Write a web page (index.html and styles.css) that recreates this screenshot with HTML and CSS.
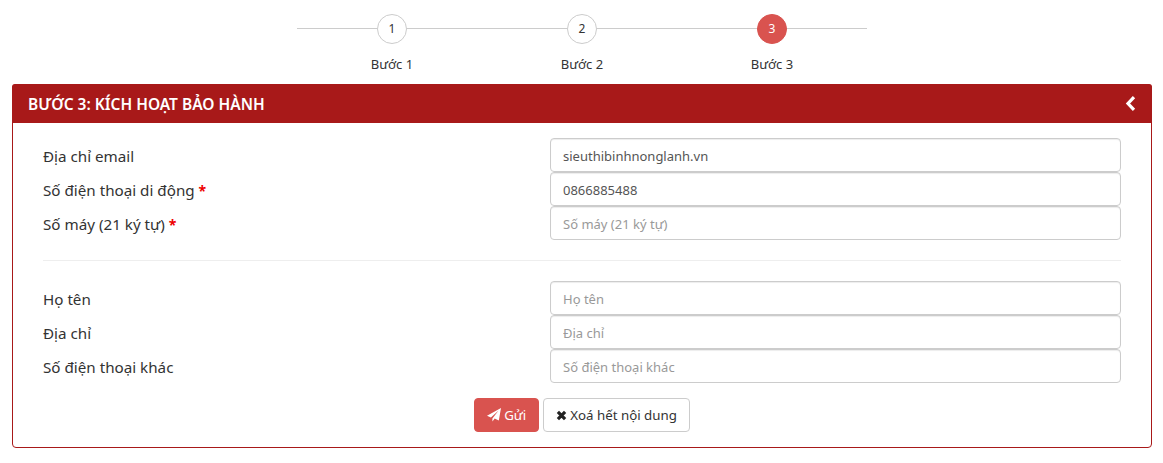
FILE: index.html
```html
<!DOCTYPE html>
<html lang="vi">

<head>
    <meta charset="UTF-8">
    <title>Kích hoạt bảo hành</title>
    <link rel="stylesheet" href="styles.css">
</head>

<body>
    <ul class="steps">
        <li class="step"><span class="step-num">1</span><span class="step-name">Bước 1</span></li>
        <li class="step"><span class="step-num">2</span><span class="step-name">Bước 2</span></li>
        <li class="step active"><span class="step-num">3</span><span class="step-name">Bước 3</span></li>
    </ul>

    <section class="panel">
        <div class="panel-heading">
            <span>BƯỚC 3: KÍCH HOẠT BẢO HÀNH</span>
            <svg class="back-icon" width="12" height="15" viewBox="0 0 12 15"><path d="M9 1.2 3 7.5l6 6.3" fill="none" stroke="#fff" stroke-width="3.2"/></svg>
        </div>
        <form class="panel-body">
            <div class="row">
                <label>Địa chỉ email</label>
                <input type="text" value="sieuthibinhnonglanh.vn">
            </div>
            <div class="row">
                <label>Số điện thoại di động <b>*</b></label>
                <input type="text" value="0866885488">
            </div>
            <div class="row">
                <label>Số máy (21 ký tự) <b>*</b></label>
                <input type="text" placeholder="Số máy (21 ký tự)">
            </div>
            <hr>
            <div class="row">
                <label>Họ tên</label>
                <input type="text" placeholder="Họ tên">
            </div>
            <div class="row">
                <label>Địa chỉ</label>
                <input type="text" placeholder="Địa chỉ">
            </div>
            <div class="row">
                <label>Số điện thoại khác</label>
                <input type="text" placeholder="Số điện thoại khác">
            </div>
            <div class="btn-box">
                <button type="button" class="btn btn-send">
                    <svg width="14" height="14" viewBox="0 0 14 14"><path d="M14 0 11.8 12.4 7.7 10.6 5.4 13.6V10.4L11.6 2.6 3.9 9.5 0 7.8Z" fill="#fff"/></svg>
                    Gửi
                </button>
                <button type="button" class="btn">
                    <svg width="11" height="11" viewBox="0 0 11 11"><path d="M1.9 1.9 9.1 9.1M9.1 1.9 1.9 9.1" fill="none" stroke="#222" stroke-width="3.2"/></svg>
                    Xoá hết nội dung
                </button>
            </div>
        </form>
    </section>
</body>

</html>
```

FILE: styles.css
```css
* {
    box-sizing: border-box;
}

body {
    margin: 0;
    padding: 14px 11px 0 12px;
    font-family: "Noto Sans", "Open Sans", sans-serif;
    font-size: 14px;
    color: #333;
    background: #fff;
}

.steps {
    display: flex;
    justify-content: center;
    margin: 0;
    padding: 0;
    list-style: none;
}

.step {
    position: relative;
    display: flex;
    flex-direction: column;
    align-items: center;
    width: 190px;
    height: 70px;
}

.step::before {
    content: "";
    position: absolute;
    top: 14px;
    left: 0;
    right: 0;
    border-top: 1px solid #ccc;
}

.step-num {
    position: relative;
    width: 30px;
    height: 30px;
    border: 1px solid #ccc;
    border-radius: 50%;
    background: #fff;
    font-size: 12px;
    line-height: 28px;
    text-align: center;
}

.step-name {
    margin-top: 10px;
    font-size: 13px;
    line-height: 20px;
}

.step.active .step-num {
    border-color: #d9534f;
    background: #d9534f;
    color: #fff;
}

.panel {
    height: 364px;
    border: 1px solid #a81919;
    border-radius: 4px;
}

.panel-heading {
    display: flex;
    justify-content: space-between;
    align-items: center;
    height: 39px;
    padding: 0 15px 0 16px;
    margin: -1px -1px 0;
    border-radius: 3px 3px 0 0;
    background: #a81919;
    color: #fff;
    font-size: 15.5px;
    font-weight: 600;
}

.panel-body {
    padding: 15px 30px 0;
}

.row {
    display: flex;
    align-items: center;
    height: 34px;
}

.row label {
    width: 507px;
    padding-top: 2px;
    font-size: 15.2px;
}

.row b {
    font-size: 14px;
    color: #e00;
}

.row input {
    flex: 1;
    min-width: 0;
    height: 34px;
    padding: 7px 12px 5px;
    border: 1px solid #ccc;
    border-radius: 4px;
    box-shadow: inset 0 1px 1px rgba(0, 0, 0, .075);
    font: inherit;
    font-size: 13px;
    color: #555;
}

.row input::placeholder {
    color: #999;
}

hr {
    margin: 20px 0;
    border: 0;
    border-top: 1px solid #eee;
}

.btn-box {
    display: flex;
    justify-content: center;
    gap: 4px;
    margin-top: 15px;
}

.btn {
    display: flex;
    align-items: center;
    gap: 3px;
    height: 34px;
    padding: 0 12px;
    border: 1px solid #ccc;
    border-radius: 4px;
    background: #fff;
    font: inherit;
    font-size: 13.3px;
    color: #333;
}

.btn-send {
    border-color: #d9534f;
    background: #d9534f;
    color: #fff;
}
```
